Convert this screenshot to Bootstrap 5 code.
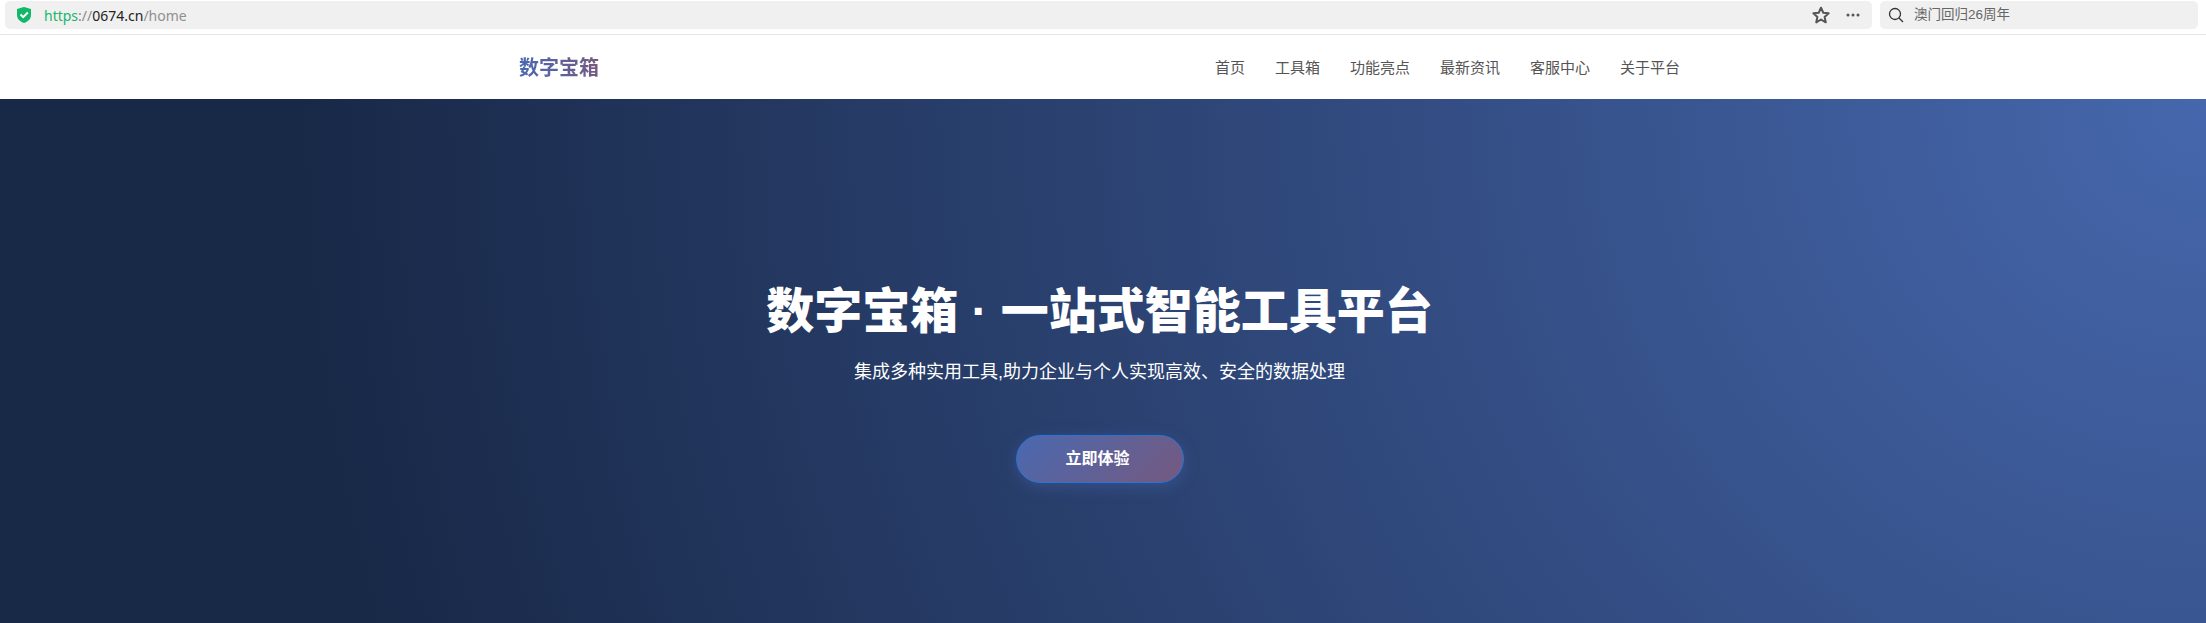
<!DOCTYPE html>
<html lang="zh-CN">
<head>
  <meta charset="UTF-8">
  <meta name="viewport" content="width=device-width, initial-scale=1.0">
  <title>数字宝箱</title>
  <link href="https://cdn.jsdelivr.net/npm/bootstrap@5.3.0/dist/css/bootstrap.min.css" rel="stylesheet">
  <style>
    body {
      font-family: "Liberation Sans", "Noto Sans CJK SC", sans-serif;
      background: #fff;
    }
    /* 浏览器地址栏 */
    .addr-strip {
      height: 35px;
      padding: 1px 8px 0 5px;
      border-bottom: 1px solid #e6e6e6;
      gap: 8px;
      background: #fff;
    }
    .addr-field {
      height: 28px;
      background: #f0f0f0;
      border-radius: 5px;
    }
    .addr-main {
      flex: 1 1 auto;
      padding: 0 8px 0 11px;
      font-family: "Noto Sans", "Noto Sans CJK SC", sans-serif;
      font-size: 14px;
    }
    .addr-search {
      flex: 0 0 318px;
      padding: 0 8px;
      font-size: 13.5px;
      color: #666;
    }
    .search-word { margin-left: 2px; }
    .url-proto { color: #18b56b; }
    .url-sep { color: #8a8a8a; }
    .url-host { color: #222; }
    .url-path { color: #8f8f8f; }
    /* 导航 */
    .site-nav {
      height: 64px;
      padding: 2px 7px 0 0;
      background: #fff;
    }
    .nav-inner { width: 1161px; }
    .site-brand {
      font-size: 20px;
      font-weight: 700;
      background: linear-gradient(90deg, #4a69b0, #75597f);
      -webkit-background-clip: text;
      background-clip: text;
      color: transparent;
    }
    .site-links { gap: 30px; }
    .site-links a {
      font-size: 15px;
      color: #555;
      text-decoration: none;
    }
    /* 首屏 */
    .hero-area {
      height: 524px;
      background: radial-gradient(circle at top right, #4667ad 0, #182847 84%);
      color: #fff;
      padding: 44px 7px 0 0;
    }
    .hero-title {
      font-size: 48px;
      font-weight: 900;
      line-height: 1.2;
      margin-bottom: 19px;
    }
    .hero-sub {
      font-size: 18px;
      line-height: 1.5;
      margin-bottom: 49px;
    }
    .hero-cta {
      width: 168px;
      height: 48px;
      padding: 0 16px 0 12px;
      border: 1px solid #2a74d8;
      border-radius: 24px;
      font-size: 16px;
      font-weight: 700;
      color: #fff;
      background: linear-gradient(135deg, #4a69b0, #75597f);
      box-shadow: 0 4px 15px rgba(74, 105, 176, .4);
    }
  </style>
</head>
<body>
  <!-- 地址栏 -->
  <div class="addr-strip d-flex align-items-start">
    <div class="addr-field addr-main d-flex align-items-center">
      <svg width="16" height="18" viewBox="0 0 16 18" class="me-2 flex-shrink-0"><path d="M8 1 L15 3 V9 C15 13 12 15.500 8 17 C4 15.500 1 13 1 9 V3 Z" fill="#12b76a"/><path d="M4.500 8.500 L7.200 11.200 L11.800 6.500" fill="none" stroke="#fff" stroke-width="2"/></svg>
      <span class="ms-1"><span class="url-proto">https</span><span class="url-sep">://</span><span class="url-host">0674.cn</span><span class="url-path">/home</span></span>
      <svg width="18" height="18" viewBox="0 0 16 16" class="ms-auto"><path d="M8 1.500 L10 6 L14.800 6.500 L11.200 9.700 L12.200 14.500 L8 12 L3.800 14.500 L4.800 9.700 L1.200 6.500 L6 6 Z" fill="none" stroke="#555" stroke-width="1.800" stroke-linejoin="round"/></svg>
      <svg width="14" height="4" viewBox="0 0 14 4" class="ms-3 me-1"><circle cx="2" cy="2" r="1.500" fill="#555"/><circle cx="7" cy="2" r="1.500" fill="#555"/><circle cx="12" cy="2" r="1.500" fill="#555"/></svg>
    </div>
    <div class="addr-field addr-search d-flex align-items-center">
      <svg width="16" height="16" viewBox="0 0 16 16" class="me-2"><circle cx="7" cy="7" r="5.500" fill="none" stroke="#333" stroke-width="1.300"/><path d="M11 11 L15 15" stroke="#333" stroke-width="1.300"/></svg>
      <span class="search-word">澳门回归26周年</span>
    </div>
  </div>

  <!-- 导航 -->
  <nav class="site-nav d-flex justify-content-center align-items-center">
    <div class="nav-inner d-flex justify-content-between align-items-center">
      <a class="site-brand text-decoration-none" href="#">数字宝箱</a>
      <div class="site-links d-flex">
        <a href="#">首页</a>
        <a href="#">工具箱</a>
        <a href="#">功能亮点</a>
        <a href="#">最新资讯</a>
        <a href="#">客服中心</a>
        <a href="#">关于平台</a>
      </div>
    </div>
  </nav>

  <!-- 首屏 -->
  <section class="hero-area d-flex flex-column align-items-center justify-content-center text-center">
    <h1 class="hero-title">数字宝箱 · 一站式智能工具平台</h1>
    <p class="hero-sub">集成多种实用工具,助力企业与个人实现高效、安全的数据处理</p>
    <button class="btn hero-cta" type="button">立即体验</button>
  </section>

  <script src="https://cdn.jsdelivr.net/npm/bootstrap@5.3.0/dist/js/bootstrap.bundle.min.js"></script>
</body>
</html>
